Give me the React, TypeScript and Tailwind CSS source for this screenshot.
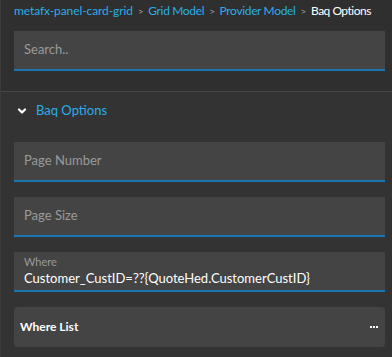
import { ChevronDown } from 'lucide-react';

const font = { fontFamily: 'Lato, "Noto Sans", sans-serif' };

function Field({ label, value }: { label: string; value?: string }) {
  if (value) {
    return (
      <div className="h-10 bg-[#444444] border-b-2 border-[#1b75b3] px-2.5 pt-[3px]">
        <div className="text-[11px] leading-[14px] text-[#9a9a9a]">{label}</div>
        <div className="text-[13px] leading-[18px] text-white whitespace-nowrap">{value}</div>
      </div>
    );
  }
  return (
    <div className="h-10 bg-[#444444] border-b-2 border-[#1b75b3] px-2.5 flex items-center">
      <span className="text-[13px] text-[#9a9a9a]">{label}</span>
    </div>
  );
}

export default function App() {
  return (
    <div className="w-[392px] h-[357px] bg-[#333333] border-l border-[#3c3c3c] overflow-hidden" style={font}>
      <div className="bg-[#2f2f2f] pl-[13px] pr-[7px] pt-[3px] pb-5 border-b border-[#474747]">
        <div className="flex items-center gap-[5px] text-[12px] leading-[16px] whitespace-nowrap tracking-[-0.35px]">
          <span className="text-[#2aaee8] tracking-[-0.1px]">metafx-panel-card-grid</span>
          <span className="text-[#9a9a9a] text-[10px]">&gt;</span>
          <span className="text-[#2aaee8]">Grid Model</span>
          <span className="text-[#9a9a9a] text-[10px]">&gt;</span>
          <span className="text-[#2aaee8]">Provider Model</span>
          <span className="text-[#9a9a9a] text-[10px]">&gt;</span>
          <span className="text-white tracking-[-0.5px]">Baq Options</span>
        </div>
        <div className="mt-[12px] h-10 bg-[#444444] border-b-2 border-[#1b75b3] px-2.5 flex items-center">
          <span className="text-[13px] text-[#9a9a9a]">Search..</span>
        </div>
      </div>
      <div className="pl-[13px] pr-[7px]">
        <div className="flex items-center gap-2 h-[38px] pl-0.5">
          <ChevronDown className="w-3 h-3 text-white" strokeWidth={4.5} />
          <span className="text-[13px] text-[#2aaee8]">Baq Options</span>
        </div>
        <div className="flex flex-col gap-[15px] mt-[12px]">
          <Field label="Page Number" />
          <Field label="Page Size" />
          <Field label="Where" value="Customer_CustID=??{QuoteHed.CustomerCustID}" />
          <div className="h-10 bg-[#444444] rounded flex items-center justify-between pl-1.5 pr-[7px]">
            <span className="text-[12px] font-bold text-white">Where List</span>
            <div className="flex gap-px">
              <div className="w-0.5 h-0.5 bg-white" />
              <div className="w-0.5 h-0.5 bg-white" />
              <div className="w-0.5 h-0.5 bg-white" />
            </div>
          </div>
        </div>
      </div>
    </div>
  );
}
